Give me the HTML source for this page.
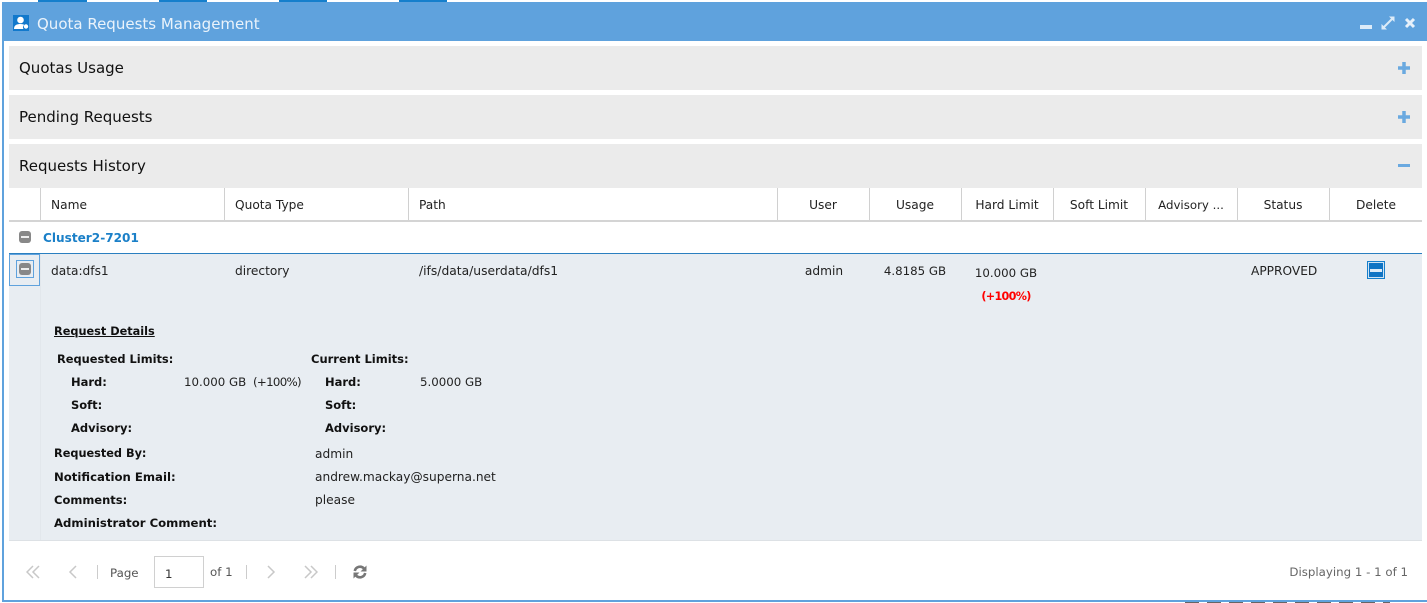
<!DOCTYPE html>
<html><head><meta charset="utf-8"><style>
html,body{margin:0;padding:0;background:#fff;width:1427px;height:603px;overflow:hidden}
body{position:relative;font-family:"DejaVu Sans","Liberation Sans",sans-serif;font-size:12.2px;color:#222}
div,span.t,svg{position:absolute}
.t{white-space:nowrap;line-height:16px;height:16px;margin-top:1px}
.c{transform:translateX(-50%)}
.h{font-size:15px;color:#111;line-height:22px;height:22px;left:19px}
.b{font-weight:bold;font-size:11.500px;color:#111}
.n{font-size:11.800px}
.p{left:9px;width:1413px;height:44px;background:#ebebeb}
.v{top:188px;width:1px;height:32px;background:#d0d0d0}
.g{background:#888;border-radius:3px}
</style></head><body>
<div style="left:38px;top:0;width:49px;height:2px;background:#157fcc"></div>
<div style="left:159px;top:0;width:48px;height:2px;background:#157fcc"></div>
<div style="left:279px;top:0;width:48px;height:2px;background:#157fcc"></div>
<div style="left:399px;top:0;width:48px;height:2px;background:#157fcc"></div>
<div style="left:1185px;top:602px;width:205px;height:1px;background:repeating-linear-gradient(90deg,#666 0 14px,#fff 14px 22px)"></div>

<div style="left:2px;top:2px;width:1425px;height:600px;background:#fff;box-sizing:border-box;border:solid #5fa2dd;border-width:0 0 2px 2px"></div>
<div style="left:2px;top:2px;width:1425px;height:39px;background:#5fa2dd"></div>

<svg style="left:13px;top:15px" width="16" height="16" viewBox="0 0 16 16"><rect width="16" height="16" fill="#1279cc"/><circle cx="7.500" cy="5" r="3.300" fill="#fff"/><path d="M1 14c0-4 3-5 6.500-5 2 0 3 .4 4 1-1.600.6-2 2.500-1 4z" fill="#fff"/><circle cx="13" cy="11.500" r="2.200" fill="#fff"/></svg>
<span class="t" style="left:37px;top:12px;font-size:15px;line-height:22px;height:22px;color:#eaf3fb">Quota Requests Management</span>
<div style="left:1360px;top:25px;width:12px;height:4px;background:#dcebf8"></div>
<svg style="left:1380px;top:15px" width="16" height="16" viewBox="0 0 16 16"><path d="M3 13L13 3" stroke="#dcebf8" stroke-width="2"/><path d="M9 1.500h5.500V7zM1.500 9v5.500H7z" fill="#dcebf8"/></svg>
<svg style="left:1404px;top:17px" width="12" height="12" viewBox="0 0 12 12"><path d="M2 2l8 8M10 2l-8 8" stroke="#e6f0fa" stroke-width="3"/></svg>

<div class="p" style="top:46px"></div>
<div class="p" style="top:95px"></div>
<div class="p" style="top:144px"></div>
<span class="t h" style="top:56px">Quotas Usage</span>
<span class="t h" style="top:105px">Pending Requests</span>
<span class="t h" style="top:154px">Requests History</span>
<svg style="left:1397px;top:61px" width="14" height="14"><path d="M1 7h12M7 1v12" stroke="#6aa9e0" stroke-width="3.500"/></svg>
<svg style="left:1397px;top:110px" width="14" height="14"><path d="M1 7h12M7 1v12" stroke="#6aa9e0" stroke-width="3.500"/></svg>
<div style="left:1398px;top:164px;width:12px;height:3px;background:#6aa9e0"></div>

<div class="v" style="left:40px"></div><div class="v" style="left:224px"></div><div class="v" style="left:408px"></div><div class="v" style="left:777px"></div><div class="v" style="left:869px"></div><div class="v" style="left:961px"></div><div class="v" style="left:1053px"></div><div class="v" style="left:1145px"></div><div class="v" style="left:1237px"></div><div class="v" style="left:1329px"></div>
<div style="left:9px;top:220px;width:1413px;height:2px;background:#d4d4d4"></div>

<span class="t" style="left:51px;top:196px">Name</span>
<span class="t" style="left:235px;top:196px">Quota Type</span>
<span class="t" style="left:419px;top:196px">Path</span>
<span class="t c" style="left:823px;top:196px">User</span>
<span class="t c" style="left:915px;top:196px">Usage</span>
<span class="t c" style="left:1007px;top:196px">Hard Limit</span>
<span class="t c" style="left:1099px;top:196px">Soft Limit</span>
<span class="t c n" style="left:1191px;top:196px">Advisory ...</span>
<span class="t c" style="left:1283px;top:196px">Status</span>
<span class="t c" style="left:1376px;top:196px">Delete</span>

<div class="g" style="left:19px;top:231px;width:12px;height:12px"></div>
<div style="left:21px;top:236px;width:8px;height:2px;background:#eee"></div>
<span class="t" style="left:43px;top:229px;font-size:12.100px;font-weight:bold;color:#1b80c8">Cluster2-7201</span>

<div style="left:9px;top:253px;width:1413px;height:287px;background:#e8edf2"></div>
<div style="left:9px;top:253px;width:1413px;height:1px;background:#2a7fc0"></div>
<div style="left:9px;top:540px;width:1413px;height:1px;background:#dde1e5"></div>
<div style="left:40px;top:254px;width:1px;height:286px;background:#e2e7ec"></div>
<div style="left:9px;top:254px;width:31px;height:32px;box-sizing:border-box;border:1px solid #5fa2dd"></div>
<div style="left:16px;top:260px;width:18px;height:18px;box-sizing:border-box;border:1px solid #5fa2dd"></div>
<div class="g" style="left:19px;top:263px;width:12px;height:12px"></div>
<div style="left:21px;top:268px;width:8px;height:2px;background:#eee"></div>

<span class="t" style="left:51px;top:262px">data:dfs1</span>
<span class="t" style="left:235px;top:262px">directory</span>
<span class="t" style="left:419px;top:262px;font-size:12.300px">/ifs/data/userdata/dfs1</span>
<span class="t c" style="left:824px;top:262px">admin</span>
<span class="t c n" style="left:915px;top:262px">4.8185 GB</span>
<span class="t c n" style="left:1006px;top:264px">10.000 GB</span>
<span class="t c b" style="left:1006px;top:288px;color:#f00;font-size:11.200px;letter-spacing:-.7px">(+100%)</span>
<span class="t" style="left:1251px;top:262px">APPROVED</span>
<div style="left:1367px;top:261px;width:18px;height:18px;box-sizing:border-box;border:1px solid #157fcc;background:#cfe3f4"></div>
<div style="left:1369px;top:263px;width:14px;height:14px;background:#0f74c4"></div>
<div style="left:1370px;top:269px;width:12px;height:3px;background:#dcebf8"></div>

<span class="t b" style="left:54px;top:323px;font-size:11.300px;text-decoration:underline">Request Details</span>
<span class="t b" style="left:57px;top:350px;font-size:11.400px">Requested Limits:</span>
<span class="t b" style="left:71px;top:373px">Hard:</span>
<span class="t n" style="left:184px;top:373px">10.000 GB</span>
<span class="t n" style="left:253px;top:373px;letter-spacing:-.7px">(+100%)</span>
<span class="t b" style="left:71px;top:396px">Soft:</span>
<span class="t b" style="left:71px;top:419px">Advisory:</span>
<span class="t b" style="left:311px;top:350px">Current Limits:</span>
<span class="t b" style="left:325px;top:373px">Hard:</span>
<span class="t n" style="left:420px;top:373px">5.0000 GB</span>
<span class="t b" style="left:325px;top:396px">Soft:</span>
<span class="t b" style="left:325px;top:419px">Advisory:</span>
<span class="t b" style="left:54px;top:445px;font-size:11.300px">Requested By:</span>
<span class="t" style="left:315px;top:445px">admin</span>
<span class="t b" style="left:54px;top:468px;font-size:11.700px">Notification Email:</span>
<span class="t" style="left:315px;top:468px">andrew.mackay@superna.net</span>
<span class="t b" style="left:54px;top:491px">Comments:</span>
<span class="t" style="left:315px;top:491px">please</span>
<span class="t b" style="left:54px;top:514px;font-size:11.700px">Administrator Comment:</span>

<svg style="left:26px;top:565px" width="14" height="14" fill="none" stroke="#c8c8c8" stroke-width="1.500"><path d="M7 1L1 7l6 6M13 1L7 7l6 6"/></svg>
<svg style="left:68px;top:565px" width="10" height="14" fill="none" stroke="#c8c8c8" stroke-width="1.500"><path d="M8 1L2 7l6 6"/></svg>
<div style="left:97px;top:565px;width:1px;height:14px;background:#ccc"></div>
<span class="t n" style="left:110px;top:564px;color:#555">Page</span>
<div style="left:154px;top:556px;width:50px;height:32px;box-sizing:border-box;border:1px solid #d0d0d0;background:#fff"></div>
<span class="t n" style="left:165px;top:565px;color:#333">1</span>
<span class="t n" style="left:210px;top:563px;color:#555">of 1</span>
<div style="left:246px;top:565px;width:1px;height:14px;background:#ccc"></div>
<svg style="left:266px;top:565px" width="10" height="14" fill="none" stroke="#c8c8c8" stroke-width="1.500"><path d="M2 1l6 6-6 6"/></svg>
<svg style="left:304px;top:565px" width="14" height="14" fill="none" stroke="#c8c8c8" stroke-width="1.500"><path d="M1 1l6 6-6 6M7 1l6 6-6 6"/></svg>
<div style="left:335px;top:565px;width:1px;height:14px;background:#ccc"></div>
<svg style="left:353px;top:565px" width="14" height="14" viewBox="0 0 14 14" fill="none" stroke="#777" stroke-width="2.600"><path d="M1.800 6A5.300 5.300 0 0 1 11 3.500M12.200 8A5.300 5.300 0 0 1 3 10.500"/><path d="M13.500 .5v6H7.500zM.5 13.500v-6h6z" fill="#777" stroke="none"/></svg>
<span class="t n" style="right:19px;top:563px;color:#666">Displaying 1 - 1 of 1</span>
</body></html>
